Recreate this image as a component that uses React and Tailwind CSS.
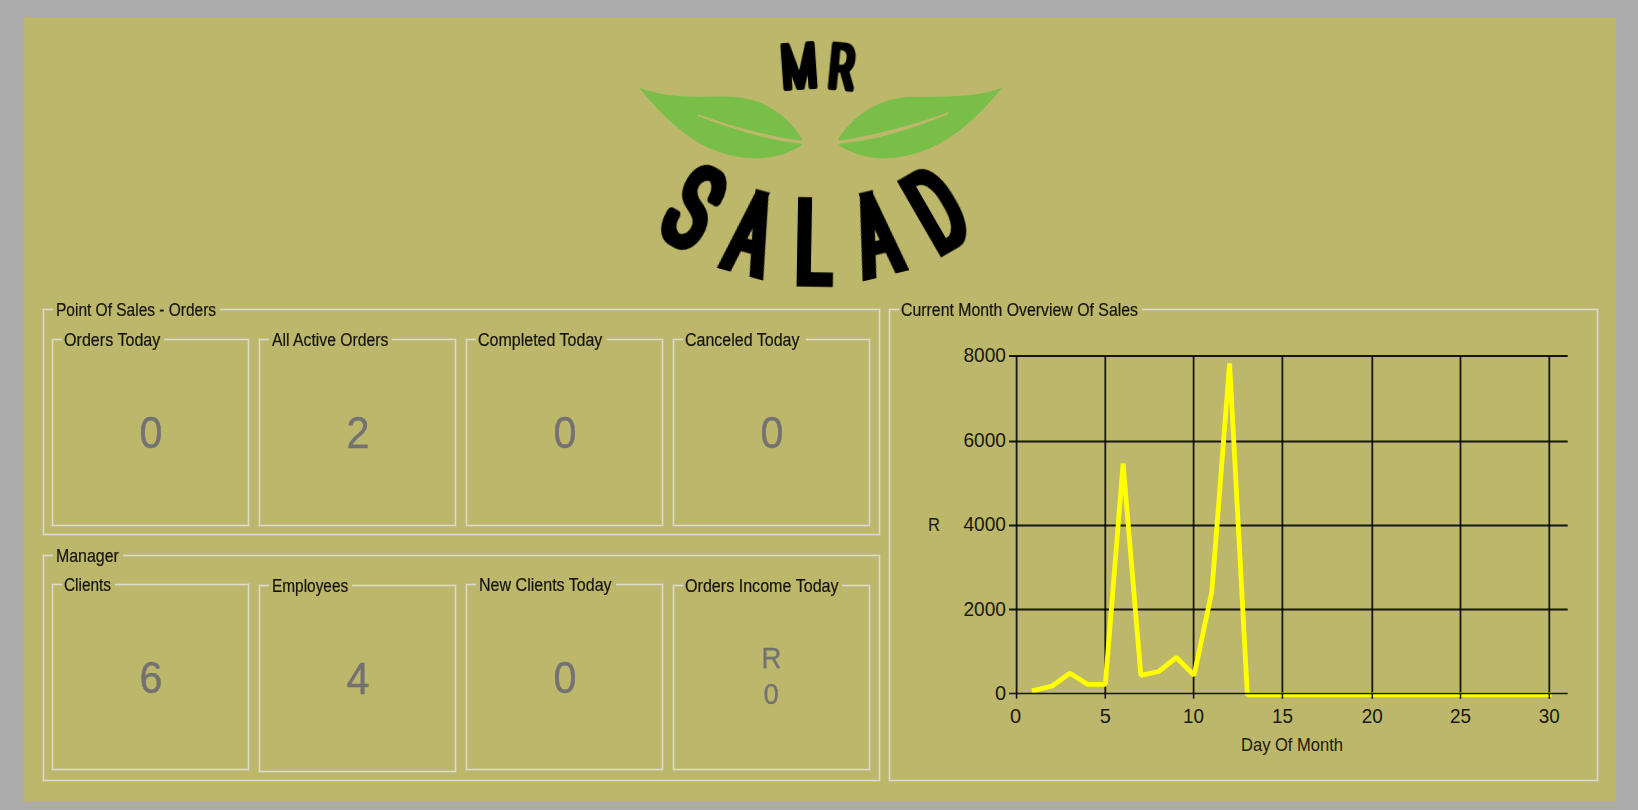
const letters = [
  { ch: "M", x: 537, y: 138, r: -4, sx: 0.66, size: 180, sw: 5.2, join: "round", f: "widen-sm" },
  { ch: "R", x: 667, y: 140, r: 5.5, sx: 0.62, size: 178, sw: 5.4, join: "round", f: "widen-sm" },
  { ch: "S", x: 221, y: 562, r: 30, sx: 0.57, size: 322, sw: 9.3, join: "round", f: "widen-lg" },
  { ch: "A", x: 393, y: 641, r: 15.3, sx: 0.56, size: 316, sw: 8.8, join: "miter", f: "widen-lg" },
  { ch: "L", x: 580, y: 666, r: 1, sx: 0.56, size: 326, sw: 9.3, join: "miter", f: "widen-lg" },
  { ch: "A", x: 768, y: 645, r: -13.6, sx: 0.56, size: 316, sw: 8.8, join: "miter", f: "widen-lg" },
  { ch: "D", x: 949, y: 569, r: -30, sx: 0.55, size: 324, sw: 9.3, join: "miter", f: "widen-lg" },
];

function Logo() {
  return (
    <svg className="mx-auto mt-[3px] block h-[280px] w-[400px] shrink-0 overflow-visible" viewBox="0 0 1200 840">
      <defs>
        <filter id="widen-sm" x="-50%" y="-20%" width="200%" height="140%">
          <feMorphology operator="dilate" radius="6 0.01" />
        </filter>
        <filter id="widen-lg" x="-50%" y="-20%" width="200%" height="140%">
          <feMorphology operator="dilate" radius="9 0.01" />
        </filter>
      </defs>
      <g fill="#79be48">
        <path d="M57 203 C150 238 250 228 330 230 C430 232 510 290 545 357 L545 362 C440 348 330 317 233 282 L233 288 C330 325 440 361 545 371 L545 376 C505 403 455 415 405 415 C240 412 140 300 57 203Z" />
        <path d="M1146 203 C1070 233 960 230 880 230 C770 232 700 290 657 353 L657 362 C770 345 880 315 985 277 L985 283 C880 325 770 362 657 371 L659 377 C700 403 745 415 797 415 C950 410 1060 310 1146 203Z" />
      </g>
      {letters.map((l, i) => (
        <g key={i} transform={`translate(${l.x} ${l.y}) rotate(${l.r})`} filter={`url(#${l.f})`}>
          <text
            transform={`scale(${l.sx} 1)`}
            y={l.size * 0.3555}
            fontSize={l.size}
            textAnchor="middle"
            fontWeight="100"
            stroke="#000"
            strokeWidth={l.sw}
            strokeLinejoin={l.join}
            strokeMiterlimit="2"
            vectorEffect="non-scaling-stroke"
            className="font-['Roboto',sans-serif]"
          >
            {l.ch}
          </text>
        </g>
      ))}
    </svg>
  );
}

function Group({ title, className, legend, text, children }) {
  return (
    <fieldset className={`min-w-0 border border-[#dcdbd0] shadow-[0_0_0_1px_rgba(220,220,215,0.3),inset_0_0_0_1px_rgba(220,220,215,0.3)] ${className}`}>
      <legend className={`h-[19px] bg-[#bdb76b] text-[17.5px] leading-[21px] whitespace-nowrap text-[#15140c] [-webkit-text-stroke:0.2px] ${legend}`}>
        <span className={`inline-block origin-left ${text}`}>{title}</span>
      </legend>
      {children}
    </fieldset>
  );
}

function Stat({ title, value, legend, text, className = "h-[196px]" }) {
  return (
    <Group title={title} legend={`ml-[9px] ${legend}`} text={text} className={`w-[197px] ${className}`}>
      <div className="flex h-[170px] items-center justify-center pl-px text-[43.5px] leading-none text-[#727272] [-webkit-text-stroke:0.4px]">
        <span className="scale-x-[0.95]">{value}</span>
      </div>
    </Group>
  );
}

const xs = [
  [0, 1016.6], [5, 1105.3], [10, 1193.6], [15, 1282.4], [20, 1372.3], [25, 1460.5], [30, 1549.3],
];
const ys = [
  [8000, 356, 362.3], [6000, 441.5, 446.7], [4000, 525.5, 530.7], [2000, 609.5, 616], [0, 693.5, 700.2],
];
const points = [690.3, 686, 673.3, 684.3, 684.3, 463.5, 675.3, 671.5, 657.5, 675.3, 591.5, 363.5, 694.8]
  .map((y, i) => `${1016.6 + 17.75 * (i + 1)},${y}`)
  .join(" ");

function SalesChart() {
  return (
    <svg className="block h-[461px] w-[707px] font-['Liberation_Sans',sans-serif]" viewBox="890 319 707 461">
      <g stroke="#000" strokeWidth="1.8" strokeOpacity="0.88">
        {ys.slice(0, 4).map(([v, y]) => <line key={v} x1="1009" x2="1567.7" y1={y} y2={y} />)}
        {xs.map(([v, x]) => <line key={v} x1={x} x2={x} y1="356" y2="693" />)}
      </g>
      <polyline points={`${points} 1549.3,694.8`} fill="none" stroke="#ff0" strokeWidth="4.8" strokeLinejoin="bevel" strokeLinecap="square" />
      <g stroke="#000" strokeWidth="1.6" strokeOpacity="0.88">
        <line x1="1009" x2="1567.7" y1="693.5" y2="693.5" />
        {xs.map(([v, x]) => <line key={v} x1={x} x2={x} y1="694" y2="698.7" />)}
      </g>
      <g fontSize="20" fill="#1a190f">
        {ys.map(([v, , base]) => (
          <text key={v} x="1006" y={base} textAnchor="end" textLength={v ? 42.5 : undefined} lengthAdjust="spacingAndGlyphs">{v}</text>
        ))}
        {xs.map(([v, x]) => (
          <text key={v} x={x - (v ? 0 : 1)} y="722.5" textAnchor="middle" textLength={v > 9 ? 21 : undefined} lengthAdjust="spacingAndGlyphs">{v}</text>
        ))}
      </g>
      <g fontSize="17.5" fill="#1a190f">
        <text x="928" y="530.5" textLength="12" lengthAdjust="spacingAndGlyphs">R</text>
        <text x="1241" y="751" textLength="102" lengthAdjust="spacingAndGlyphs">Day Of Month</text>
      </g>
    </svg>
  );
}

export default function App() {
  return (
    <div className="h-[810px] w-[1638px] overflow-hidden bg-[#ababab] pt-[17px] pl-6 font-['Liberation_Sans',sans-serif]">
      <main className="flex h-[785px] w-[1592px] flex-col bg-[#bdb76b]">
        <Logo />
        <div className="flex gap-[9px] pl-[19px]">
          <div className="flex w-[837px] flex-col gap-[11px]">
            <Group title="Point Of Sales - Orders" legend="ml-[9px] w-[167px] pl-[3px]" text="scale-x-[0.885]" className="h-[235px]">
              <div className="mt-[11px] ml-2 flex gap-[10px]">
                <Stat title="Orders Today" value="0" legend="w-[102px] pl-[2px]" text="scale-x-[0.92]" />
                <Stat title="All Active Orders" value="2" legend="w-[123px] pl-[3px]" text="scale-x-[0.9]" />
                <Stat title="Completed Today" value="0" legend="w-[131px] pl-[2px]" text="scale-x-[0.915]" />
                <Stat title="Canceled Today" value="0" legend="w-[123px] pl-[2px]" text="scale-x-[0.914]" />
              </div>
            </Group>
            <Group title="Manager" legend="ml-[9px] w-[70px] pl-[3px]" text="scale-x-[0.91]" className="h-[235px]">
              <div className="mt-[10px] ml-2 flex items-start gap-[10px]">
                <Stat title="Clients" value="6" legend="w-[53px] pl-[2px]" text="scale-x-[0.88]" className="h-[195px]" />
                <Stat title="Employees" value="4" legend="w-[83px] pl-[3px]" text="scale-x-[0.88]" className="mt-px h-[196px]" />
                <Stat title="New Clients Today" value="0" legend="w-[140px] pl-[3px]" text="scale-x-[0.917]" className="h-[195px]" />
                <Group title="Orders Income Today" legend="ml-[9px] w-[159px] pl-[2px]" text="scale-x-[0.92]" className="mt-px h-[194px] w-[197px]">
                  <div className="flex h-[162px] flex-col items-center justify-center text-[29px] leading-[36px] text-[#727272] [-webkit-text-stroke:0.3px]">
                    <span className="scale-x-[0.95]">R</span>
                    <span className="scale-x-[0.95]">0</span>
                  </div>
                </Group>
              </div>
            </Group>
          </div>
          <Group title="Current Month Overview Of Sales" legend="ml-[9px] w-[243px] pl-[2px]" text="scale-x-[0.906]" className="h-[481px] w-[709px]">
            <SalesChart />
          </Group>
        </div>
      </main>
    </div>
  );
}
